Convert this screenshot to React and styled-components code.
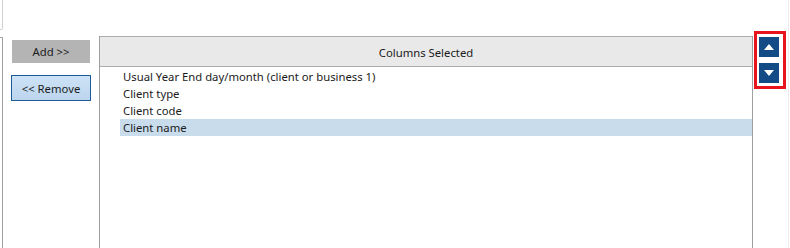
import React from "react";
import styled, { createGlobalStyle } from "styled-components";

const Global = createGlobalStyle`
  html, body { margin: 0; padding: 0; background: #fff; }
  body {
    font-family: "Noto Sans", "Open Sans", sans-serif;
    font-size: 11.3px;
    color: #1b1b1b;
  }
`;

const Page = styled.div`
  width: 790px;
  height: 248px;
  overflow: hidden;
  display: flex;
  align-items: stretch;
  background: #fff;
`;

const LeftEdge = styled.div`
  width: 3px;
  display: flex;
  flex-direction: column;
`;

const TopBox = styled.div`
  height: 30px;
  box-sizing: border-box;
  border-right: 1px solid #d0d0d0;
  border-bottom: 1px solid #d0d0d0;
  border-bottom-right-radius: 2px;
`;

const LeftList = styled.div`
  margin-top: 7px;
  flex: 1;
  box-sizing: border-box;
  border-top: 1px solid #a9a9a9;
  border-right: 1px solid #a0a0a0;
`;

const ButtonCol = styled.div`
  width: 96px;
  padding-top: 40px;
  padding-left: 8px;
  box-sizing: border-box;
  display: flex;
  flex-direction: column;
  align-items: flex-start;
`;

const ActionButton = styled.button`
  box-sizing: border-box;
  font-family: inherit;
  font-size: 11.3px;
  color: #1b1b1b;
  display: flex;
  align-items: center;
  justify-content: center;
  padding: 0;
  cursor: default;
  ${(p) =>
    p.$primary
      ? `
    width: 80px;
    height: 26px;
    margin-top: 12px;
    background: linear-gradient(#cde2f5, #bcd5ee);
    border: 1px solid #1f5b99;
  `
      : `
    width: 78px;
    height: 23px;
    margin-left: 1px;
    background: #b4b4b4;
    border: none;
  `}
`;

const Panel = styled.div`
  width: 654px;
  margin-top: 36px;
  box-sizing: border-box;
  border-left: 1px solid #a0a0a0;
  border-right: 1px solid #a0a0a0;
  display: flex;
  flex-direction: column;
`;

const Header = styled.div`
  height: 31px;
  box-sizing: border-box;
  background: #e9e9e9;
  border-top: 1px solid #acacac;
  border-bottom: 1px solid #acacac;
  display: flex;
  align-items: center;
  justify-content: center;
  padding-top: 1px;
`;

const List = styled.div`
  padding-top: 1px;
  display: flex;
  flex-direction: column;
`;

const Row = styled.div`
  height: 17px;
  line-height: 17px;
  margin-left: 20px;
  padding-left: 3px;
  white-space: nowrap;
  background: ${(p) => (p.$selected ? "#c8dcec" : "transparent")};
`;

const Side = styled.div`
  width: 35px;
  padding-top: 31px;
  padding-left: 1px;
  box-sizing: border-box;
`;

const Highlight = styled.div`
  width: 32px;
  box-sizing: border-box;
  border: 3px solid #e8141c;
  padding: 3px 4px 3px 2px;
  display: flex;
  flex-direction: column;
  gap: 6px;
`;

const ArrowButton = styled.div`
  width: 20px;
  height: 20px;
  background: #124b86;
  display: flex;
`;

const RightRule = styled.div`
  width: 1px;
  background: #ececec;
`;

const Arrow = ({ down }) => (
  <ArrowButton>
    <svg width="20" height="20" viewBox="0 0 20 20">
      <polygon
        points={down ? "5,7 15,7 10,13" : "5,13 15,13 10,7"}
        fill="#fff"
      />
    </svg>
  </ArrowButton>
);

const rows = [
  "Usual Year End day/month (client or business 1)",
  "Client type",
  "Client code",
  "Client name",
];

export default function App() {
  return (
    <>
      <Global />
      <Page>
        <LeftEdge>
          <TopBox />
          <LeftList />
        </LeftEdge>
        <ButtonCol>
          <ActionButton>Add &gt;&gt;</ActionButton>
          <ActionButton $primary>&lt;&lt; Remove</ActionButton>
        </ButtonCol>
        <Panel>
          <Header>Columns Selected</Header>
          <List>
            {rows.map((r, i) => (
              <Row key={r} $selected={i === rows.length - 1}>
                {r}
              </Row>
            ))}
          </List>
        </Panel>
        <Side>
          <Highlight>
            <Arrow />
            <Arrow down />
          </Highlight>
        </Side>
        <RightRule />
      </Page>
    </>
  );
}
